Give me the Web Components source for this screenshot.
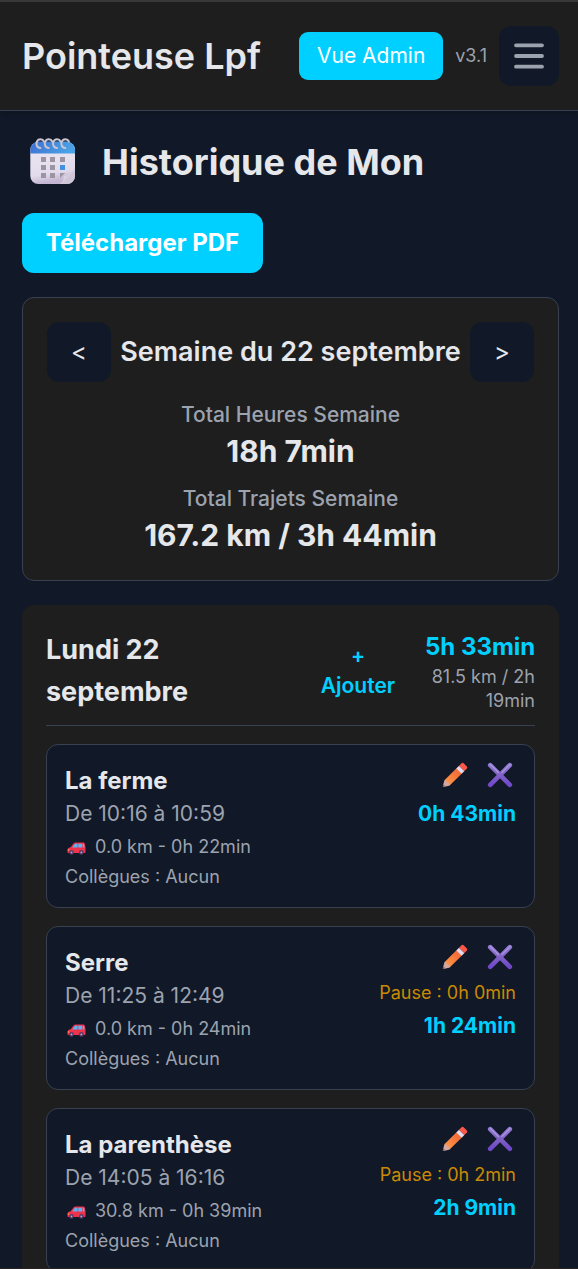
<!DOCTYPE html>
<html lang="fr">
<head>
<meta charset="utf-8">
<title>Pointeuse Lpf</title>
<style>
html,body{margin:0;height:1269px;overflow:hidden;background:#111827}
body{font-family:Inter,"Liberation Sans",sans-serif;color:#e5e7eb;
--panel:#1e1e1e;--bg:#111827;--line:#374151;--muted:#9ca3af;--accent:#00d0ff}
</style>
</head>
<body>
<lpf-app></lpf-app>
<script>
const define=(name,html,after)=>{
  const t=document.createElement('template');t.innerHTML=html;
  customElements.define(name,class extends HTMLElement{
    connectedCallback(){
      if(this.shadowRoot)return;
      this.attachShadow({mode:'open'}).append(t.content.cloneNode(true));
      if(after)after.call(this,this.shadowRoot);
    }
  });
};

define('icon-calendar',`<style>:host{display:block;width:46px;height:46px;margin-top:-2px}svg{display:block}</style>
<svg width="46" height="46" viewBox="0 0 46 46">
<defs><linearGradient id="b" x2="1" y2="0.2"><stop stop-color="#3f6fd0"/><stop offset="1" stop-color="#4aa3e6"/></linearGradient>
<linearGradient id="p" x2="0.2" y2="1"><stop stop-color="#eee9f4"/><stop offset=".8" stop-color="#e2dbec"/><stop offset="1" stop-color="#c4b6d2"/></linearGradient>
<linearGradient id="f" x2="1" y2="1"><stop offset=".15" stop-color="#f4eff8"/><stop offset=".6" stop-color="#cfc5d8"/></linearGradient></defs>
<rect x=".3" y="4" width="44.700" height="42" rx="8" fill="url(#p)"/>
<path d="M.3 15.500V12a8.500 8.500 0 0 1 8.500-8.500h27.700a8.500 8.500 0 0 1 8.500 8.500v3.500z" fill="url(#b)"/>
<g fill="#9a94a3"><path d="M11 19h5v5h-5zM20 19h5v5h-5zM30 19h5v5h-5zM11 27h5v5h-5zM20 27h5v5h-5zM11 35h5v5h-5zM20 35h5v5h-5zM30 35h5l-5 5z"/></g>
<path d="M30 27h5v5h-5z" fill="#438fe0"/>
<path d="M45 30v8a8 8 0 0 1-8 8h-7c3-1.500 3.500-5 4-7.500 4-1 8.500-4 11-8.500z" fill="url(#f)"/>
<g fill="none" stroke="#cbc5d2" stroke-width="2" stroke-linecap="round"><path id="r" d="M14 3.500C12.700.6 8.300.4 6.700 4c-1 3 .7 6 3.700 6"/><use href="#r" x="8.300"/><use href="#r" x="16.600"/><use href="#r" x="24.900"/></g>
</svg>`);

define('icon-pencil',`<style>:host{display:block}svg{display:block}</style>
<svg width="26" height="26" viewBox="0 0 26 26">
<defs><linearGradient id="o" x1="0" y1="1" x2="1" y2="0"><stop stop-color="#ffa04a"/><stop offset=".7" stop-color="#f4703a"/></linearGradient></defs>
<path d="M2.400 18.200 14.500 6.200l5.400 5.400L7.600 23.500z" fill="url(#o)"/>
<path d="M2.400 18.200.9 23.900c-.2.800.3 1.200 1 1l5.900-1.500c-.3-2.600-2.600-4.900-5.400-5.200z" fill="#d5a69c"/>
<path d="M1.300 22.300.9 23.900c-.2.800.3 1.200 1 1l1.700-.4z" fill="#796b78"/>
<path d="M14.300 6.400 17 3.700l5.400 5.400-2.700 2.700z" fill="#e3daee"/>
<path d="m17 3.700 2.300-2.300c.9-.8 1.800-.7 2.600.1l2.700 2.700c.8.800.9 1.700.1 2.600l-2.300 2.300z" fill="#fa5848"/>
</svg>`);

define('icon-cross',`<style>:host{display:block}svg{display:block}</style>
<svg width="26" height="26" viewBox="0 0 26 26"><defs><linearGradient id="x" x2="0" y2="1"><stop stop-color="#9279d5"/><stop offset=".5" stop-color="#8062c6"/><stop offset="1" stop-color="#7048cb"/></linearGradient></defs>
<path d="M3.200 3.200 22.800 22.800M22.800 3.200 3.200 22.800" fill="none" stroke="url(#x)" stroke-width="4.600" stroke-linecap="round"/>
<path d="m15 10.300 8-8M3.500 2.500l8 8" stroke="#aa97dc" stroke-width="1.200" stroke-linecap="round"/></svg>`);

define('icon-car',`<style>:host{display:block}svg{display:block}</style>
<svg width="19" height="13" viewBox="0 0 19 13">
<path d="M6.500 1.500C7.300.6 8 .4 9 .4h7c1.300 0 1.700.5 1.900 1.600l.6 3.500v4.600c0 .6-.3.900-.9.900H1.600c-.8 0-1.200-.5-1.100-1.300l.2-2.200C.8 6 2 5.500 3.600 5.200z" fill="#ef334c"/>
<path d="m5.300 5.400 2.300-3.200c.3-.4.600-.5 1-.5h1.900v3.700zM11.300 1.700h3.700v3.700h-3.700zM15.700 1.700h.7c.4 0 .6.300.7.700l.4 3h-1.800z" fill="#5eb4f3"/>
<circle cx="4.500" cy="10.400" r="2.300" fill="#563966"/><circle cx="14.300" cy="10.400" r="2.300" fill="#563966"/><circle cx="4.500" cy="10.400" r=".9" fill="#bba5cc"/><circle cx="14.300" cy="10.400" r=".9" fill="#bba5cc"/>
<path d="M.7 7.500h1.600v1H.6z" fill="#ffb45b"/></svg>`);

define('app-header',`<style>
:host{display:flex;align-items:center;box-sizing:border-box;height:111px;padding:0 19px 0 22px;background:var(--panel);border-top:2px solid #393939;border-bottom:1px solid var(--line);box-shadow:0 2px 6px rgba(0,0,0,.22);position:relative}
h1{margin:0 auto 0 0;font-size:36px;line-height:48px;font-weight:600;white-space:nowrap}
.admin{width:144px;height:48px;border-radius:9px;background:var(--accent);color:#fff;font:400 21px/48px Inter,sans-serif;text-align:center;white-space:nowrap}
.v{margin:0 12px;font-size:18px;line-height:24px;color:var(--muted)}
.menu{width:60px;height:60px;border-radius:12px;background:var(--bg);display:grid;place-items:center}
svg{display:block}
</style><h1>Pointeuse Lpf</h1><div class="admin">Vue Admin</div><span class="v">v3.1</span>
<div class="menu"><svg width="36" height="36" viewBox="0 0 36 36"><path d="M5 7.300h26M5 18h26M5 28.700h26" stroke="#9ca3af" stroke-width="3.800" stroke-linecap="round"/></svg></div>`);

define('page-title',`<style>
:host{display:flex;align-items:center;gap:26px;padding:0 0 0 8px;height:54px}
h2{margin:0;font-size:36px;line-height:54px;font-weight:700;white-space:nowrap}
</style><icon-calendar></icon-calendar><h2><slot></slot></h2>`);

define('pdf-button',`<style>:host{display:block;width:241px;height:60px;border-radius:12px;background:var(--accent);color:#fff;font-size:24px;font-weight:700;line-height:60px;text-align:center;white-space:nowrap}</style><slot></slot>`);

define('week-card',`<style>
:host{display:block;box-sizing:border-box;height:284px;padding:24px;border:1px solid var(--line);border-radius:12px;background:var(--panel);text-align:center}
.nav{display:flex;justify-content:space-between;align-items:center;margin-bottom:18px}
.b{width:64px;height:60px;border-radius:12px;background:var(--bg);font-size:24px;line-height:60px}
.w{font-size:27px;font-weight:600;line-height:42px;white-space:nowrap}
.l{font-size:21px;font-weight:500;line-height:30px;color:var(--muted)}
.n{font-size:30px;line-height:42px;font-weight:700;margin-bottom:12px}
</style><div class="nav"><div class="b">&lt;</div><div class="w">Semaine du 22 septembre</div><div class="b">&gt;</div></div>
<div class="l">Total Heures Semaine</div><div class="n">18h 7min</div>
<div class="l">Total Trajets Semaine</div><div class="n">167.2 km / 3h 44min</div>`);

define('day-card',`<style>
:host{display:block;padding:24px;border-radius:12px 12px 0 0;background:var(--panel)}
header{display:flex;align-items:center;height:84px;padding-bottom:12px;border-bottom:1px solid var(--line);margin-bottom:18px}
h3{margin:0 auto 0 0;width:180px;font-size:27px;line-height:42px;font-weight:700}
.add{width:76px;margin-right:29px;font-size:21px;font-weight:600;line-height:30px;text-align:center;color:var(--accent)}
.sum{width:110px;text-align:right;font-size:18px;line-height:24px;color:var(--muted)}
b{display:block;font-size:24px;line-height:36px;color:var(--accent);white-space:nowrap}
.list{display:flex;flex-direction:column;gap:18px}
</style><header><h3>Lundi 22 septembre</h3><div class="add">+<br>Ajouter</div><div class="sum"><b>5h 33min</b>81.5 km / 2h 19min</div></header>
<div class="list"><slot></slot></div>`);

define('visit-card',`<style>
:host{display:flex;justify-content:space-between;box-sizing:border-box;height:164px;padding:18px;border:1px solid var(--line);border-radius:12px;background:var(--bg);white-space:nowrap}
.name{font-size:24px;line-height:36px;font-weight:700}
.time{font-size:21px;line-height:30px;color:var(--muted)}
.s{font-size:18px;line-height:24px;margin-top:6px;color:var(--muted);display:flex;align-items:center}
icon-car{margin:2px 9px 0 2px}
.r{text-align:right}
.icons{display:flex;justify-content:flex-end;gap:19px;height:23px;align-items:center;padding-right:3px;margin-bottom:13px}
.pause{font-size:18px;line-height:24px;margin-bottom:6px;color:#ca8a04}
.dur{font-size:21px;line-height:30px;font-weight:700;color:var(--accent)}
</style><div><div class="name"></div><div class="time"></div><div class="s"><icon-car></icon-car><span class="trip"></span></div><div class="s">Collègues : Aucun</div></div>
<div class="r"><div class="icons"><icon-pencil></icon-pencil><icon-cross></icon-cross></div><div class="pause"></div><div class="dur"></div></div>`,
function(r){
  for(const k of['name','time','trip','pause','dur']){
    const e=r.querySelector('.'+k),v=this.getAttribute(k);
    if(v)e.textContent=v;else e.remove();
  }
});

define('lpf-app',`<style>
:host{display:block;box-sizing:border-box;height:1269px;overflow:hidden;border-bottom:1px solid #2a2323}
main{display:block;padding:24px 19px 0 22px}
pdf-button{margin:24px 0}
week-card{margin-bottom:24px}
</style><app-header></app-header><main>
<page-title>Historique de Mon</page-title>
<pdf-button>Télécharger PDF</pdf-button>
<week-card></week-card>
<day-card>
<visit-card name="La ferme" time="De 10:16 à 10:59" trip="0.0 km - 0h 22min" dur="0h 43min"></visit-card>
<visit-card name="Serre" time="De 11:25 à 12:49" trip="0.0 km - 0h 24min" pause="Pause : 0h 0min" dur="1h 24min"></visit-card>
<visit-card name="La parenthèse" time="De 14:05 à 16:16" trip="30.8 km - 0h 39min" pause="Pause : 0h 2min" dur="2h 9min"></visit-card>
</day-card></main>`);
</script>
</body>
</html>
